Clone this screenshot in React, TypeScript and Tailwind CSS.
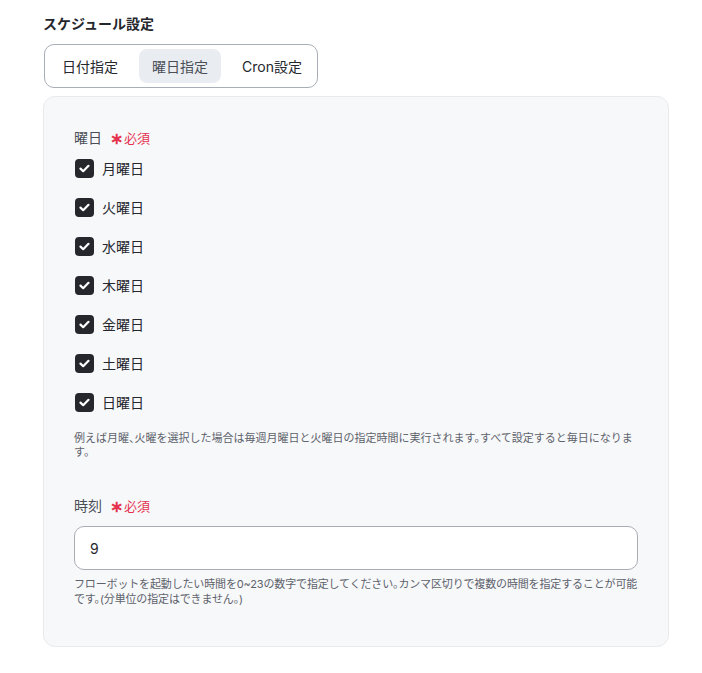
import { useState } from 'react'
import clsx from 'clsx'

const days = ['月曜日', '火曜日', '水曜日', '木曜日', '金曜日', '土曜日', '日曜日']
const tabs = ['日付指定', '曜日指定', 'Cron設定']

function Required() {
  return (
    <span className="ml-[8px] flex items-center text-[13px] text-[#e5334f]">
      <span className="mr-[1px] text-[16px] font-bold leading-none">∗</span>必須
    </span>
  )
}

function Check() {
  return (
    <span className="flex h-[19px] w-[19px] items-center justify-center rounded-[4px] bg-[#25272d]">
      <svg width="11" height="9" viewBox="0 0 11 9" fill="none">
        <path d="M1.5 4.6 4.2 7.2 9.5 1.8" stroke="white" strokeWidth="2.2" strokeLinecap="round" strokeLinejoin="round" />
      </svg>
    </span>
  )
}

export default function App() {
  const [tab, setTab] = useState(1)
  const [hour, setHour] = useState('9')

  return (
    <div className="min-h-screen bg-white pl-[43px] pt-[14px] text-[#25272d]" style={{ fontFamily: 'Inter, "Noto Sans CJK JP", sans-serif' }}>
      <h2 className="text-[14px] font-bold leading-[20px]">スケジュール設定</h2>

      <div className="mt-[10px] ml-[1px] inline-flex h-[44px] items-center gap-[8px] rounded-[10px] border border-[#a9aeb6] pl-[4px] pr-[2px]">
        {tabs.map((t, i) => (
          <button
            key={t}
            type="button"
            onClick={() => setTab(i)}
            className={clsx(
              'h-[34px] rounded-[8px] px-[13px] text-[14px]',
              tab === i ? 'bg-[#e9ecf0] text-[#4a4f57]' : 'text-[#25272d]'
            )}
          >
            {t}
          </button>
        ))}
      </div>

      <div className="mt-[8px] w-[626px] rounded-[12px] border border-[#e8eaee] bg-[#f7f8fa] px-[30px] pb-[39px] pt-[30px]">
        <div className="flex items-center text-[14px] leading-[22px] text-[#4a4f57]">
          曜日<Required />
        </div>
        <div className="mt-[10px] flex flex-col gap-[20px]">
          {days.map(d => (
            <label key={d} className="flex h-[19px] items-center gap-[8px] pl-[1px] text-[14px] text-[#25272d]">
              <Check />
              {d}
            </label>
          ))}
        </div>
        <p className="mt-[19px] text-[11px] leading-[14px] text-[#5d626b] [font-feature-settings:'halt']">
          例えば月曜、火曜を選択した場合は毎週月曜日と火曜日の指定時間に実行されます。すべて設定すると毎日になります。
        </p>

        <div className="mt-[36px] flex items-center text-[14px] leading-[22px] text-[#4a4f57]">
          時刻<Required />
        </div>
        <input
          value={hour}
          onChange={e => setHour(e.target.value)}
          className="mt-[9px] h-[44px] w-full rounded-[10px] border border-[#a9aeb6] bg-white px-[15px] text-[14px] text-[#25272d] outline-none"
        />
        <p className="mt-[7px] text-[11px] leading-[15px] tracking-[-0.15px] text-[#5d626b] [font-feature-settings:'halt']">
          フローボットを起動したい時間を0~23の数字で指定してください。カンマ区切りで複数の時間を指定することが可能です。(分単位の指定はできません。)
        </p>
      </div>
    </div>
  )
}
